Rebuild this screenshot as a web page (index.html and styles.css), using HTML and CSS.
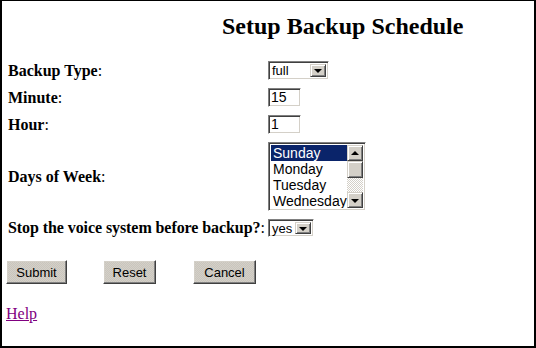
FILE: index.html
```html
<!DOCTYPE html>
<html>
<head>
<meta charset="utf-8">
<title>Setup Backup Schedule</title>
<link rel="stylesheet" href="styles.css">
</head>
<body>
<h2 class="title">Setup Backup Schedule</h2>
<div class="form">
  <div class="label"><b>Backup Type</b>:</div>
  <div class="cell">
    <div class="combo combo-type">
      <span class="combo-text">full</span>
      <span class="arrow-btn"><span class="tri-down"></span></span>
    </div>
  </div>

  <div class="label"><b>Minute</b>:</div>
  <div class="cell"><div class="field">15</div></div>

  <div class="label"><b>Hour</b>:</div>
  <div class="cell"><div class="field">1</div></div>

  <div class="label"><b>Days of Week</b>:</div>
  <div class="cell">
    <div class="listbox">
      <div class="items">
        <div class="item selected">Sunday</div>
        <div class="item">Monday</div>
        <div class="item">Tuesday</div>
        <div class="item">Wednesday</div>
      </div>
      <div class="scrollbar">
        <span class="arrow-btn sb-btn"><span class="tri-up"></span></span>
        <span class="thumb"></span>
        <span class="track"></span>
        <span class="arrow-btn sb-btn"><span class="tri-down"></span></span>
      </div>
    </div>
  </div>

  <div class="label label-long"><b>Stop the voice system before backup?</b>:</div>
  <div class="cell">
    <div class="combo combo-yes">
      <span class="combo-text">yes</span>
      <span class="arrow-btn"><span class="tri-down"></span></span>
    </div>
  </div>
</div>

<div class="buttons">
  <span class="btn btn-submit">Submit</span>
  <span class="btn btn-reset">Reset</span>
  <span class="btn btn-cancel">Cancel</span>
</div>

<p class="help"><a href="#" class="help-link">Help</a></p>
</body>
</html>
```

FILE: styles.css
```css
html, body {
  margin: 0;
  padding: 0;
}
body {
  box-sizing: border-box;
  width: 536px;
  height: 348px;
  border-style: solid;
  border-color: #000;
  border-width: 1px 2px 2px 2px;
  padding: 0 6px;
  background: #fff;
  color: #000;
  font-family: "Liberation Serif", "Times New Roman", serif;
  font-size: 16px;
  overflow: hidden;
}
.title {
  margin: 11px 0 17px 214px;
  font-size: 24px;
  line-height: 28px;
  font-weight: bold;
}
.form {
  display: grid;
  grid-template-columns: 260px auto;
  align-items: center;
}
.label {
  line-height: 18px;
  white-space: nowrap;
}
.label-long {
  letter-spacing: -0.08px;
}
.cell {
  display: flex;
  align-items: center;
}
.combo, .field, .listbox {
  box-sizing: border-box;
  border: 1px solid;
  border-color: #808080 #fff #fff #808080;
  box-shadow: inset 1px 1px 0 #404040, inset -1px -1px 0 #d4d0c8;
  background: #fff;
  font-family: "Liberation Sans", Arial, sans-serif;
  font-size: 14px;
}
.combo {
  display: flex;
  align-items: stretch;
  padding: 2px;
  margin: 4px 0;
}
.combo-type { width: 61px; height: 19px; }
.combo-yes { width: 46px; height: 18px; }
.combo-text {
  flex: 1;
  padding-left: 1px;
  font-size: 13px;
  line-height: 14px;
  white-space: nowrap;
}
.arrow-btn {
  box-sizing: border-box;
  width: 16px;
  flex: none;
  display: flex;
  align-items: center;
  justify-content: center;
  background: #d4d0c8;
  border: 1px solid;
  border-color: #d4d0c8 #404040 #404040 #d4d0c8;
  box-shadow: inset 1px 1px 0 #fff, inset -1px -1px 0 #808080;
}
.tri-down {
  width: 0;
  height: 0;
  border-left: 4px solid transparent;
  border-right: 4px solid transparent;
  border-top: 4px solid #000;
  margin-top: 1px;
}
.tri-up {
  width: 0;
  height: 0;
  border-left: 4px solid transparent;
  border-right: 4px solid transparent;
  border-bottom: 4px solid #000;
  margin-bottom: 1px;
}
.field {
  width: 33px;
  height: 19px;
  margin: 4px 0;
  padding: 1px 2px;
  line-height: 15px;
}
.listbox {
  width: 98px;
  height: 69px;
  margin: 4px 0;
  padding: 2px;
  display: flex;
}
.items {
  flex: 1;
  overflow: hidden;
}
.item {
  height: 16px;
  line-height: 16px;
  padding-left: 2px;
  white-space: nowrap;
}
.item.selected {
  background: #0a246a;
  color: #fff;
}
.scrollbar {
  width: 16px;
  flex: none;
  display: flex;
  flex-direction: column;
}
.sb-btn {
  height: 16px;
  flex: none;
}
.thumb {
  box-sizing: border-box;
  height: 17px;
  background: #d4d0c8;
  border: 1px solid;
  border-color: #d4d0c8 #404040 #404040 #d4d0c8;
  box-shadow: inset 1px 1px 0 #fff, inset -1px -1px 0 #808080;
}
.track {
  flex: 1;
  background: repeating-conic-gradient(#d4d0c8 0 25%, #fff 0 50%) 0 0 / 2px 2px;
}
.buttons {
  display: flex;
  margin: 19px 0 0 -2px;
}
.btn {
  box-sizing: border-box;
  height: 24px;
  display: flex;
  align-items: center;
  justify-content: center;
  font-family: "Liberation Sans", Arial, sans-serif;
  font-size: 13px;
  background: repeating-conic-gradient(#d4d0c8 0 25%, #c9c5bd 0 50%) 0 0 / 2px 2px;
  border: 1px solid;
  border-color: #fff #404040 #404040 #fff;
  box-shadow: inset -1px -1px 0 #808080, inset 1px 1px 0 #d4d0c8;
}
.btn-submit { width: 61px; }
.btn-reset { width: 53px; margin-left: 36px; }
.btn-cancel { width: 63px; margin-left: 37px; }
.help {
  margin: 21px 0 0 -2px;
  line-height: 18px;
}
.help-link {
  color: #800080;
  text-decoration: underline;
}
```
